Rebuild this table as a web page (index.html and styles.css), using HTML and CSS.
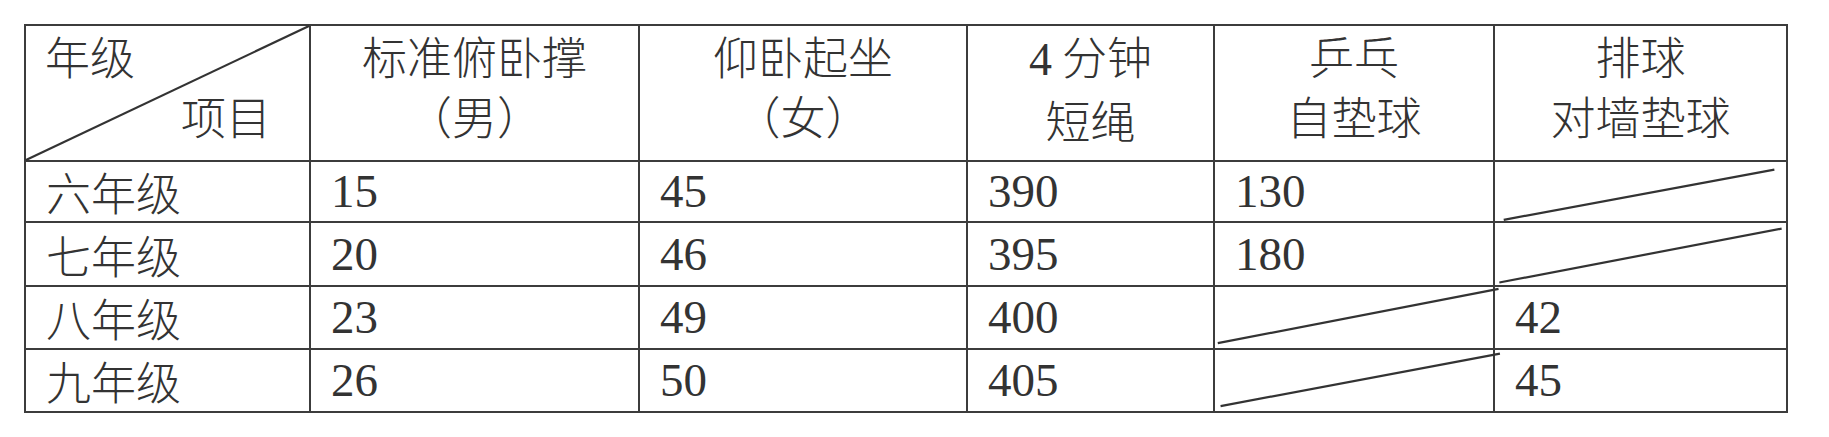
FILE: index.html
```html
<!DOCTYPE html>
<html lang="zh-CN">
<head>
<meta charset="utf-8">
<title>体育测试项目标准</title>
<link rel="stylesheet" href="styles.css">
</head>
<body>
<table class="grid">
  <colgroup>
    <col class="c0"><col class="c1"><col class="c2"><col class="c3"><col class="c4"><col class="c5">
  </colgroup>
  <thead>
    <tr class="head">
      <th class="corner">
        <svg class="slash" viewBox="0 0 100 100" preserveAspectRatio="none" aria-hidden="true"><line x1="100" y1="0" x2="0" y2="100"/></svg>
        <div class="corner-top">年级</div>
        <div class="corner-bottom">项目</div>
      </th>
      <th>标准俯卧撑<br>（男）</th>
      <th>仰卧起坐<br>（女）</th>
      <th><span class="digit">4</span> 分钟<br>短绳</th>
      <th>乒乓<br>自垫球</th>
      <th>排球<br>对墙垫球</th>
    </tr>
  </thead>
  <tbody>
    <tr class="r1">
      <td class="grade">六年级</td>
      <td class="num">15</td>
      <td class="num">45</td>
      <td class="num">390</td>
      <td class="num">130</td>
      <td class="empty"><svg class="slash" viewBox="0 0 100 100" preserveAspectRatio="none" aria-hidden="true"><line x1="3" y1="98" x2="96" y2="13"/></svg></td>
    </tr>
    <tr class="r2">
      <td class="grade">七年级</td>
      <td class="num">20</td>
      <td class="num">46</td>
      <td class="num">395</td>
      <td class="num">180</td>
      <td class="empty"><svg class="slash" viewBox="0 0 100 100" preserveAspectRatio="none" aria-hidden="true"><line x1="1.5" y1="96" x2="98.5" y2="9"/></svg></td>
    </tr>
    <tr class="r3">
      <td class="grade">八年级</td>
      <td class="num">23</td>
      <td class="num">49</td>
      <td class="num">400</td>
      <td class="empty"><svg class="slash" viewBox="0 0 100 100" preserveAspectRatio="none" aria-hidden="true"><line x1="1" y1="92" x2="102" y2="3"/></svg></td>
      <td class="num">42</td>
    </tr>
    <tr class="r4">
      <td class="grade">九年级</td>
      <td class="num">26</td>
      <td class="num">50</td>
      <td class="num">405</td>
      <td class="empty"><svg class="slash" viewBox="0 0 100 100" preserveAspectRatio="none" aria-hidden="true"><line x1="2" y1="92" x2="102.5" y2="6"/></svg></td>
      <td class="num">45</td>
    </tr>
  </tbody>
</table>
</body>
</html>
```

FILE: styles.css
```css
html, body {
  margin: 0;
  padding: 0;
  background: #ffffff;
}

body {
  padding: 24px 0 0 24px;
  font-family: "Liberation Serif", "Noto Sans CJK SC", serif;
  color: #333333;
}

.grid {
  border-collapse: collapse;
  table-layout: fixed;
  width: 1763px;
  font-family: "Noto Sans CJK SC", "Liberation Serif", sans-serif;
  font-size: 45px;
  font-weight: 300;
}

.c0 { width: 285px; }
.c1 { width: 329px; }
.c2 { width: 328px; }
.c3 { width: 247px; }
.c4 { width: 280px; }
.c5 { width: 293px; }

.grid th,
.grid td {
  border: 2px solid #3c3c3c;
  padding: 0;
  position: relative;
}

.head { height: 136px; }
.r1 { height: 61px; }
.r2 { height: 64px; }
.r3 { height: 63px; }
.r4 { height: 63px; }

.grid th {
  font-weight: 300;
  vertical-align: top;
  text-align: center;
  line-height: 60px;
}

.digit {
  font-family: "Liberation Serif", serif;
  font-size: 46px;
}

.grid .corner {
  text-align: left;
}

.corner-top {
  padding-left: 19px;
  text-align: left;
}

.corner-bottom {
  padding-right: 38px;
  text-align: right;
}

.slash {
  position: absolute;
  left: 0;
  top: 0;
  width: 100%;
  height: 100%;
  overflow: visible;
  pointer-events: none;
}

.slash line {
  stroke: #333333;
  stroke-width: 2.2;
  vector-effect: non-scaling-stroke;
}

.grid td {
  vertical-align: middle;
  line-height: 1;
}

.grid .grade {
  padding-left: 20px;
  font-family: "Noto Sans CJK SC", sans-serif;
}

.grid .num {
  padding-left: 20px;
  font-family: "Liberation Serif", serif;
  font-size: 47px;
  font-weight: 400;
}
```
